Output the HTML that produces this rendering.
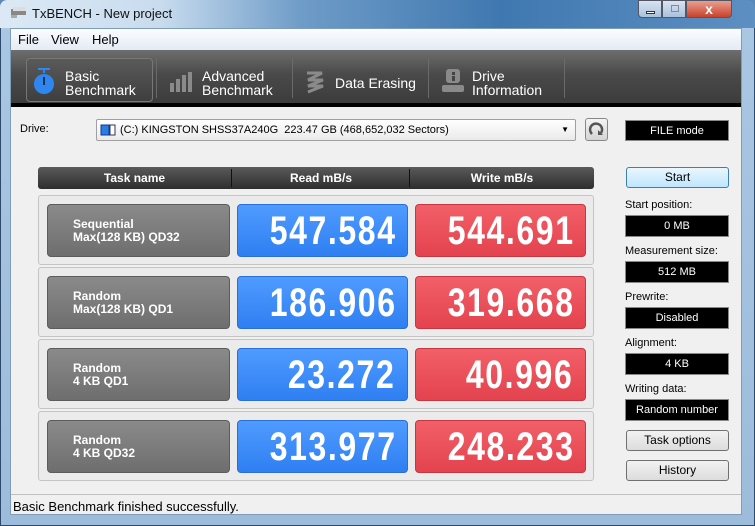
<!DOCTYPE html>
<html><head><meta charset="utf-8">
<style>
*{margin:0;padding:0;box-sizing:border-box}
body{width:755px;height:526px;overflow:hidden;background:#5a8ab8;font-family:"Liberation Sans",sans-serif;position:relative}
.abs{position:absolute}
#frame{left:0;top:0;width:755px;height:526px;background:linear-gradient(180deg,#cfe0f0 0,#a9c6e2 30px,#9dbcdc 100%);border:1px solid #2d4a6a;border-radius:7px 7px 0 0}
#titlebg{left:0;top:0;width:755px;height:28px;background:linear-gradient(90deg,#dce9f5 0,#c8dcee 160px,#6f9cc8 300px,#3f78b0 500px,#5d8fc2 755px);border-radius:7px 7px 0 0}
#title{left:32px;top:6px;font-size:13px;color:#111}
#client{left:10px;top:28px;width:732px;height:487px;background:#f0f0f0;border:1px solid #7f9db9}
#menu{left:11px;top:29px;width:730px;height:21px;background:linear-gradient(#fbfcfe,#e4ebf5);font-size:13px;color:#000}
#menu span{position:absolute;top:3px}
#tool{left:11px;top:50px;width:730px;height:53px;background:linear-gradient(#6e6e6e,#4a4a4a 45%,#3c3c3c)}
#blk{left:11px;top:103px;width:730px;height:4px;background:#000}
.tab{position:absolute;top:0;height:53px;color:#fff;font-size:14px;line-height:14px}
.sep{position:absolute;top:8px;width:1px;height:40px;background:#1e1e1e;border-right:1px solid #6a6a6a}
.hdr{left:38px;top:167px;width:556px;height:22px;background:linear-gradient(#5a5a5a,#2e2e2e);border-radius:3px;color:#fff;font-size:12px;font-weight:bold}
.hdr span{position:absolute;top:4px;text-align:center}
.row{position:absolute;left:38px;width:556px;height:70px;border:1px solid #c4c4c4;border-radius:3px;background:#ebebeb}
.task{position:absolute;left:8px;top:8px;width:183px;height:53px;background:linear-gradient(#8a8a8a,#6e6e6e);border:1px solid #5c5c5c;border-radius:4px;color:#fff;font-size:12px;font-weight:bold;line-height:13px;padding:13px 0 0 25px}
.num{position:absolute;top:8px;width:171px;height:53px;border-radius:4px;color:#fff;font-weight:bold;text-align:right;padding-right:12px;line-height:53px}
.num span{display:inline-block;font-size:40px;letter-spacing:2px;transform:scaleX(0.8);transform-origin:right center}
.rd{left:198px;background:linear-gradient(#4f9bff,#2f7ff2);border:1px solid #2a6fd6}
.wr{left:376px;background:linear-gradient(#f25f68,#e3434e);border:1px solid #c8363f}
.lbl{position:absolute;left:625px;font-size:11px;color:#000}
.box{position:absolute;left:625px;width:104px;height:22px;background:#000;color:#fff;font-size:11px;text-align:center;line-height:21px;border:1px solid #888}
.btn{position:absolute;left:626px;width:103px;height:21px;border:1px solid #707070;border-radius:3px;background:linear-gradient(#f2f2f2,#dcdcdc);font-size:12px;text-align:center;line-height:19px}
#status{left:11px;top:494px;width:730px;height:20px;border-top:1px solid #c0c0c0;background:#f0f0f0;font-size:13px;padding:4px 0 0 2px}
</style></head><body>
<div id="frame" class="abs"></div>
<div id="titlebg" class="abs"></div>
<svg class="abs" style="left:10px;top:6px" width="18" height="14"><rect x="1" y="3" width="15" height="6" fill="#888"/><rect x="3" y="1" width="13" height="4" fill="#ddd"/><rect x="1" y="9" width="6" height="3" fill="#aaa"/></svg>
<div id="title" class="abs">TxBENCH - New project</div>
<div class="abs" style="left:638px;top:0;width:24px;height:18px;background:linear-gradient(#d7e4f2,#a9c1dc);border:1px solid #556;border-radius:0 0 0 4px"><div style="position:absolute;left:7px;top:10px;width:9px;height:3px;background:#fff;border:1px solid #333"></div></div>
<div class="abs" style="left:662px;top:0;width:24px;height:18px;background:linear-gradient(#d7e4f2,#a9c1dc);border:1px solid #556"><div style="position:absolute;left:8px;top:4px;width:8px;height:7px;border:1px solid #889"></div></div>
<div class="abs" style="left:686px;top:0;width:46px;height:18px;background:linear-gradient(#e8a090,#c8432c);border:1px solid #556;border-radius:0 0 4px 0;color:#fff;font-weight:bold;font-size:14px;text-align:center;line-height:16px">x</div>
<div id="client" class="abs"></div>
<div id="menu" class="abs"><span style="left:7px">File</span><span style="left:40px">View</span><span style="left:81px">Help</span></div>
<div id="tool" class="abs">
 <div class="tab" style="left:15px;top:8px;width:127px;height:44px;background:linear-gradient(#5a5a5a,#3e3e3e);border:1px solid #777;border-radius:4px"></div>
 <svg class="abs" style="left:21px;top:17px" width="24" height="30"><rect x="6" y="1" width="12" height="2" fill="#2f86ef"/><rect x="11" y="2" width="2" height="4" fill="#2f86ef"/><circle cx="12" cy="17" r="10" fill="#2f86ef"/><rect x="11" y="10" width="2" height="8" fill="#135"/></svg>
 <div class="tab" style="left:54px;top:19px">Basic<br>Benchmark</div>
 <div class="sep" style="left:145px"></div>
 <svg class="abs" style="left:158px;top:20px" width="24" height="24" fill="#8a8a8a"><rect x="1" y="13" width="4" height="9"/><rect x="7" y="9" width="4" height="13"/><rect x="13" y="5" width="4" height="17"/><rect x="19" y="2" width="4" height="20"/></svg>
 <div class="tab" style="left:191px;top:19px">Advanced<br>Benchmark</div>
 <div class="sep" style="left:281px"></div>
 <svg class="abs" style="left:294px;top:20px" width="20" height="24" fill="none" stroke="#8a8a8a" stroke-width="3"><path d="M2 3h15L3 10h15L3 16h15L3 22"/></svg>
 <div class="tab" style="left:324px;top:26px">Data Erasing</div>
 <div class="sep" style="left:417px"></div>
 <svg class="abs" style="left:430px;top:18px" width="24" height="26" fill="#8a8a8a"><rect x="5" y="1" width="14" height="14" rx="3"/><rect x="11" y="4" width="3" height="3" fill="#444"/><rect x="11" y="8" width="3" height="5" fill="#444"/><rect x="1" y="17" width="22" height="7" rx="2"/></svg>
 <div class="tab" style="left:461px;top:19px">Drive<br>Information</div>
 <div class="sep" style="left:553px"></div>
</div>
<div id="blk" class="abs"></div>
<div class="abs" style="left:20px;top:123px;font-size:11px">Drive:</div>
<div class="abs" style="left:96px;top:119px;width:480px;height:22px;border:1px solid #a0a0a0;border-radius:2px;background:linear-gradient(#fff,#eaeaea);font-size:11px;line-height:20px;padding-left:23px">(C:) KINGSTON SHSS37A240G&nbsp; 223.47 GB (468,652,032 Sectors)<span style="position:absolute;right:6px;top:0;font-size:8px">▼</span></div>
<svg class="abs" style="left:100px;top:123px" width="16" height="14"><rect x="1" y="2" width="8" height="10" fill="#2a7de0" stroke="#0a3a90"/><rect x="10" y="2" width="5" height="10" fill="#fff" stroke="#335"/></svg>
<div class="abs" style="left:585px;top:118px;width:23px;height:23px;border:1px solid #888;border-radius:3px;background:linear-gradient(#f4f4f4,#d4d4d4)"><svg width="21" height="21"><path d="M6 15A6 6 0 1 1 15 14" fill="none" stroke="#555" stroke-width="2.5"/><path d="M12 11l5 5h-5z" fill="#555"/></svg></div>
<div class="box" style="top:120px;height:21px;left:625px">FILE mode</div>
<div class="abs hdr"><span style="left:0;width:193px">Task name</span><span style="left:193px;width:1px;top:2px;height:18px;background:#111"></span><span style="left:194px;width:178px">Read mB/s</span><span style="left:371px;width:1px;top:2px;height:18px;background:#111"></span><span style="left:372px;width:184px">Write mB/s</span></div>
<div class="row" style="top:195px"><div class="task">Sequential<br>Max(128 KB) QD32</div><div class="num rd"><span>547.584</span></div><div class="num wr"><span>544.691</span></div></div>
<div class="row" style="top:267px"><div class="task">Random<br>Max(128 KB) QD1</div><div class="num rd"><span>186.906</span></div><div class="num wr"><span>319.668</span></div></div>
<div class="row" style="top:339px"><div class="task">Random<br>4 KB QD1</div><div class="num rd"><span>23.272</span></div><div class="num wr"><span>40.996</span></div></div>
<div class="row" style="top:411px"><div class="task">Random<br>4 KB QD32</div><div class="num rd"><span>313.977</span></div><div class="num wr"><span>248.233</span></div></div>
<div class="btn" style="top:167px;border-color:#3c7fb1;background:linear-gradient(#eaf6fd,#bee6fd)">Start</div>
<div class="lbl" style="top:199px">Start position:</div><div class="box" style="top:215px">0 MB</div>
<div class="lbl" style="top:245px">Measurement size:</div><div class="box" style="top:261px">512 MB</div>
<div class="lbl" style="top:291px">Prewrite:</div><div class="box" style="top:307px">Disabled</div>
<div class="lbl" style="top:337px">Alignment:</div><div class="box" style="top:353px">4 KB</div>
<div class="lbl" style="top:383px">Writing data:</div><div class="box" style="top:399px">Random number</div>
<div class="btn" style="top:430px">Task options</div>
<div class="btn" style="top:460px">History</div>
<div id="status" class="abs">Basic Benchmark finished successfully.</div>
</body></html>
